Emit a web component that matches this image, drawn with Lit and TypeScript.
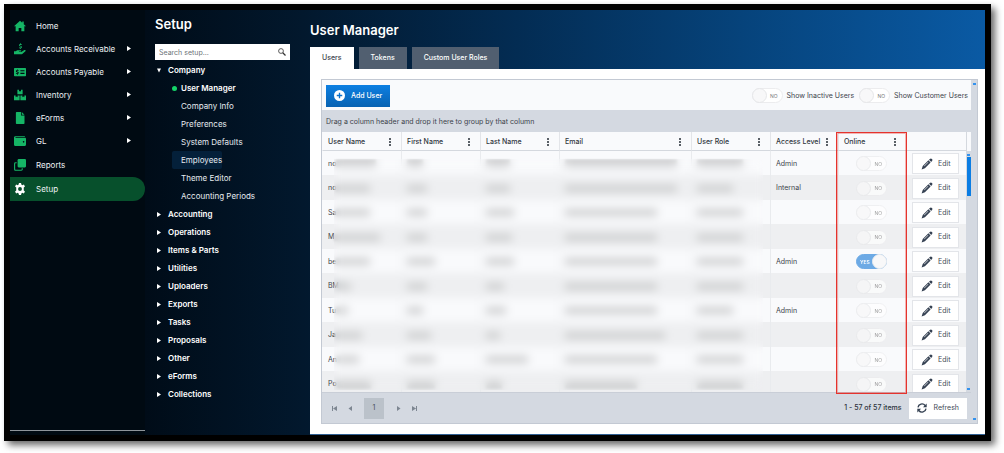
import { LitElement, html, css, svg, nothing } from "lit";
import { customElement, state } from "lit/decorators.js";
import { classMap } from "lit/directives/class-map.js";

interface NavItem {
  label: string;
  icon: keyof typeof navIcons;
  expandable?: boolean;
  tall?: boolean;
  active?: boolean;
}

interface UserRow {
  id: string;
  redacted: number[];
  access: string;
  online: boolean;
}

const navIcons = {
  home: svg`<path d="M8 1 0 8.200h2.200V15h4v-4.400h3.600V15h4V8.200H16L13 5.500V2h-2v1.700z"/>`,
  receivable: svg`<path d="M0 11h2.400l1.800-1.300h4.600c1.200 0 1.200 1.700 0 1.700H6.600v.5h3.200l3.900-2.500c1.400-.8 2.600.7 1.500 1.700L11 14.600c-.4.3-.8.400-1.300.4H0z"/><path d="M8 .4h1v1h1.200v1.100H8.200c-.7 0-.6.8 0 1l1.200.4c1.700.6 1.500 2.800-.2 3.100V8h-1V7H6.600V5.900h2.200c.8 0 .7-.9.1-1.100l-1.200-.4C6.100 3.900 6.300 1.700 8 1.400z"/>`,
  payable: svg`<path fill-rule="evenodd" d="M1 2.500h14a1 1 0 0 1 1 1v9a1 1 0 0 1-1 1H1a1 1 0 0 1-1-1v-9a1 1 0 0 1 1-1zM8.500 5.500V7H14V5.500zM8.500 9v1.500H14V9zM4 4.500v.9c-1.800.3-2 2.400-.3 3l.9.300c.5.2.5.8-.1.8H2.600v1.100H4v1h1v-1c1.700-.4 1.900-2.400.3-3l-1-.4c-.5-.2-.4-.8.1-.8h1.700V5.300H5v-.8z"/>`,
  inventory: svg`<path d="M4.500 1H6.700v2.400l1.300-.8 1.300.8V1h2.200v6h-7zM0 8.500h2.200v2.400l1.300-.8 1.300.8V8.500H7.500V15H0zM8.500 8.500h2.700v2.400l1.300-.8 1.300.8V8.500H16V15H8.500z"/>`,
  file: svg`<path d="M3.500 0h5.800v4.700H14V15a1 1 0 0 1-1 1H3.500a1 1 0 0 1-1-1V1a1 1 0 0 1 1-1z"/><path d="M10.300 0 14 3.700h-3.700z"/>`,
  wallet: svg`<path fill-rule="evenodd" d="M2 1.500h12.500v1.300H2v1h12.500c1 0 1.500.5 1.500 1.500v7.500c0 1-.5 1.700-1.500 1.700H2c-1.300 0-2-.7-2-2V3.500c0-1.300.7-2 2-2zM12.800 8a1.100 1.100 0 1 0 0 2.200 1.100 1.100 0 0 0 0-2.200z"/>`,
  copies: svg`<path d="M6.300 0h8.200A1.500 1.500 0 0 1 16 1.500v8.200a1.500 1.500 0 0 1-1.500 1.500H6.300a1.500 1.500 0 0 1-1.500-1.500V1.500A1.500 1.500 0 0 1 6.300 0z"/><path d="M3.600 5H2a1.200 1.200 0 0 0-1.200 1.200v7.600A1.200 1.200 0 0 0 2 15h7.800a1.200 1.200 0 0 0 1.200-1.200v-1.400" fill="none" stroke="currentColor" stroke-width="1.500"/>`,
  gear: svg`<path fill-rule="evenodd" d="m6.600 0-.4 2.100-1.300.8-2.100-.8L1.400 4.600 3 6v4l-1.600 1.400 1.400 2.500 2.100-.8 1.300.8.4 2.100h2.800l.4-2.100 1.300-.8 2.100.8 1.400-2.500L13 10V6l1.600-1.400-1.400-2.500-2.100.8-1.300-.8L9.400 0zM8 5.400a2.600 2.600 0 1 1 0 5.200 2.600 2.600 0 0 1 0-5.200z"/>`,
};

const navItems: NavItem[] = [
  { label: "Home", icon: "home" },
  { label: "Accounts Receivable", icon: "receivable", expandable: true },
  { label: "Accounts Payable", icon: "payable", expandable: true },
  { label: "Inventory", icon: "inventory", expandable: true },
  { label: "eForms", icon: "file", expandable: true },
  { label: "GL", icon: "wallet", expandable: true },
  { label: "Reports", icon: "copies", tall: true },
  { label: "Setup", icon: "gear", tall: true, active: true },
];

const companyPages = [
  "User Manager",
  "Company Info",
  "Preferences",
  "System Defaults",
  "Employees",
  "Theme Editor",
  "Accounting Periods",
];

const closedGroups = [
  "Accounting",
  "Operations",
  "Items & Parts",
  "Utilities",
  "Uploaders",
  "Exports",
  "Tasks",
  "Proposals",
  "Other",
  "eForms",
  "Collections",
];

const columns = [
  { label: "User Name", width: 79 },
  { label: "First Name", width: 79 },
  { label: "Last Name", width: 79 },
  { label: "Email", width: 132 },
  { label: "User Role", width: 79 },
  { label: "Access Level", width: 68 },
  { label: "Online", width: 68 },
];

const users: UserRow[] = [
  { id: "no", redacted: [40, 16, 24, 112, 46], access: "Admin", online: false },
  { id: "no", redacted: [34, 20, 24, 112, 36], access: "Internal", online: false },
  { id: "Sa", redacted: [34, 20, 28, 92, 46], access: "", online: false },
  { id: "M", redacted: [46, 20, 26, 92, 46], access: "", online: false },
  { id: "be", redacted: [34, 28, 28, 92, 46], access: "Admin", online: true },
  { id: "BM", redacted: [12, 20, 18, 92, 46], access: "", online: false },
  { id: "Tu", redacted: [12, 16, 20, 92, 36], access: "Admin", online: false },
  { id: "Ja", redacted: [26, 24, 14, 100, 46], access: "", online: false },
  { id: "An", redacted: [22, 28, 42, 92, 46], access: "", online: false },
  { id: "Po", redacted: [34, 28, 16, 72, 46], access: "", online: false },
];

@customElement("app-root")
export class AppRoot extends LitElement {
  @state() private tab = "Users";

  static styles = css`
    :host {
      display: block;
      box-sizing: border-box;
      padding: 4px 13px 13px 4px;
      background: #fff;
      color: #3c434b;
      font: 7px/12px Inter, "Liberation Sans", sans-serif;
    }
    *, *::before, *::after { box-sizing: border-box; }
    button, input { font: inherit; color: inherit; margin: 0; padding: 0; border: 0; background: none; }
    a { color: inherit; text-decoration: none; }
    ul { list-style: none; margin: 0; padding: 0; }
    h1, h2 { margin: 0; color: #fff; font-size: 13px; line-height: 16px; font-weight: 600; }
    svg { display: block; fill: currentColor; flex: none; }

    .frame {
      display: grid;
      grid-template-columns: 135px 165px minmax(0, 1fr);
      border: 6px solid #000;
      background: linear-gradient(90deg, #000a12 0, #000c18 14%, #02182d 30%, #032c53 52%, #06437b 75%, #0a5aa4 100%);
      box-shadow: 4px 4px 7px rgba(0, 0, 0, 0.6);
    }

    .nav {
      display: flex;
      flex-direction: column;
      justify-content: space-between;
      padding: 4px 0;
      background: #000a12;
      color: #eef2f5;
      font-size: 8px;
    }
    .nav-link { display: flex; align-items: center; height: 23px; padding: 0 14px 0 4px; }
    .nav-link.tall { height: 25px; }
    .nav-link svg { color: #15b566; margin-right: 10px; }
    .nav-link .label { flex: 1; }
    .nav-link.active { height: 24px; background: #07502c; border-radius: 0 12px 12px 0; }
    .nav-link.active svg { color: #fff; }
    .nav-link .caret { width: 4px; height: 5px; margin: 0; color: #fff; }
    .nav-rule { width: 100%; height: 1px; margin: 0; border: 0; background: #8d949a; }

    .sidebar { padding: 6px 20px 0 10px; color: #e6ebf0; font-size: 8px; }
    .search { display: flex; align-items: center; height: 16px; margin: 12px 0 1px; padding: 0 4px; background: #fff; color: #333; }
    .search input { flex: 1; min-width: 0; height: 16px; font-size: 7px; outline: 0; }
    .search input::placeholder { color: #6d7378; opacity: 1; }
    .group { display: flex; align-items: center; width: 100%; height: 18px; padding-left: 2px; gap: 7px; font-weight: 600; color: #fff; text-align: left; }
    .group svg { width: 4px; height: 5px; }
    .page { display: flex; align-items: center; height: 18px; margin-left: 17px; padding: 0 2px 0 9px; width: fit-content; border-radius: 2px; }
    .page.hover { width: 50px; background: #04203a; padding-right: 0; }
    .page.current { gap: 4px; padding-left: 0; font-weight: 600; color: #fff; }
    .page.current::before { content: ""; width: 5px; height: 5px; border-radius: 50%; background: #14d468; }

    .main { padding-top: 12px; }
    .tabs { display: flex; gap: 5px; margin-top: 9px; }
    .tab { height: 22px; padding: 0 12px; background: #515f70; color: #fff; font-weight: 500; }
    .tab.selected { background: #fff; color: #3c434b; }
    .panel { padding: 10px 7px 10px 11px; background: #fff; border-bottom: 1px solid #2f5f92; }
    .grid { display: flex; border: 1px solid #c3c9d3; background: #d4d9e1; }
    .content { flex: 1; min-width: 0; }
    .gutter { display: flex; flex-direction: column; justify-content: space-between; align-items: center; width: 6px; padding: 3px 0; color: #3392ee; }
    .tick { width: 3px; height: 2px; background: currentColor; }

    .toolbar { display: flex; align-items: center; gap: 5px; height: 30px; padding: 1px 3px 0 4px; background: #f9fafc; }
    .add { display: flex; align-items: center; gap: 6px; height: 22px; padding: 0 8px; margin-right: auto; background: linear-gradient(#0c7fe2, #0862b2); color: #fff; font-weight: 500; }
    .group-bar { height: 22px; padding: 6px 4px 0; }

    .switch { position: relative; display: flex; align-items: center; gap: 4px; }
    .switch input { position: absolute; width: 30px; height: 15px; opacity: 0; }
    .track { display: flex; align-items: center; justify-content: space-between; width: 31px; height: 15px; padding-right: 4px; border: 1px solid #ececee; border-radius: 8px; background: #fff; color: #777; font-size: 5px; }
    .track::before { content: ""; width: 15px; height: 15px; margin: -1px; border: 1px solid #e6e7e9; border-radius: 50%; background: #f8f8f9; }
    .cell-switch { justify-content: center; opacity: 0.7; }
    .track.on { flex-direction: row-reverse; padding: 0 0 0 3px; background: #3289dc; border-color: #3289dc; color: #fff; font-weight: 600; }

    .body { position: relative; display: flex; }
    .viewport { flex: 1; min-width: 0; max-height: 260px; overflow: hidden; }
    table { width: 100%; table-layout: fixed; border-spacing: 0; }
    th, td { padding: 1px 7px 0 5px; text-align: left; white-space: nowrap; }
    th { height: 19px; border-left: 1px solid #e3e5e9; border-bottom: 1px solid #d4d8de; background: #f9fafc; font-weight: 500; color: #30363d; }
    td { height: 24px; border-left: 1px solid #e9ebee; }
    th:first-child, td:first-child { border-left-color: transparent; }
    tbody tr { background: #f9fafc; }
    tbody tr:nth-child(even) { background: #eeeff1; }
    tbody tr:nth-child(even) td { height: 25px; }
    .head { display: flex; align-items: center; justify-content: space-between; }
    .menu { height: 12px; width: 8px; display: grid; place-items: center; color: #5a6067; }
    .name { display: flex; align-items: center; }
    .smudge { display: block; height: 7px; background: #cdcecf; filter: blur(1px); }
    .redaction { position: absolute; left: 12px; right: 32%; top: 27px; bottom: 2px; backdrop-filter: blur(4px); }
    .highlight { position: absolute; left: 79.200%; right: 9.900%; top: 0; bottom: -2px; border: 1px solid #e5332d; outline: 1px solid rgba(229, 51, 45, 0.35); outline-offset: -2px; pointer-events: none; }
    .edit, .refresh { display: flex; align-items: center; background: #fff; color: #3f4a57; }
    .edit { height: 21px; gap: 5px; padding: 0 8px; border: 1px solid #e3e5e9; }
    .edit svg, .refresh svg { color: #354152; }
    .scroll { display: flex; flex-direction: column; align-items: center; justify-content: space-between; width: 5px; padding-bottom: 2px; color: #3392ee; }
    .scroll-head { width: 100%; height: 19px; background: #f9fafc; border-left: 1px solid #d4d8de; }
    .scroll-track { flex: 1; display: flex; flex-direction: column; align-items: center; gap: 1px; padding-top: 3px; }
    .thumb { width: 4px; height: 39px; background: #0b7de3; }

    .pager { display: flex; align-items: center; height: 31px; padding: 0 4px; border-top: 1px solid #c9ced7; color: #2d343b; }
    .step { width: 16px; height: 20px; display: grid; place-items: center; color: #7d8691; }
    .current-page { width: 20px; height: 21px; margin: 0 6px; background: #bbc2ca; color: #45505c; }
    .count { margin-left: auto; margin-right: 8px; font-weight: 500; }
    .refresh { height: 21px; gap: 6px; padding: 0 8px; }
  `;

  private caret(down = false) {
    return html`<svg class="caret" width="4" height="5" viewBox="0 0 4 5" aria-hidden="true">
      <path d=${down ? "M0 .5h4L2 4.500z" : "M0 0 4 2.500 0 5z"} />
    </svg>`;
  }

  private toggle(on: boolean, name: string, label?: string) {
    return html`<label class=${classMap({ switch: true, "cell-switch": !label })}>
      <input type="checkbox" role="switch" aria-label=${name} .checked=${on} />
      <span class=${classMap({ track: true, on })}>${on ? "YES" : "NO"}</span>
      ${label ? html`<span>${label}</span>` : nothing}
    </label>`;
  }

  private smudge(width: number) {
    return html`<span class="smudge" style="width:${width}px"></span>`;
  }

  private renderNav() {
    return html`<nav class="nav" aria-label="Main">
      <ul>
        ${navItems.map(
          (n) => html`<li>
            <a href="#" class=${classMap({ "nav-link": true, tall: !!n.tall, active: !!n.active })}>
              <svg width="12" height="12" viewBox="0 0 16 16" aria-hidden="true">${navIcons[n.icon]}</svg>
              <span class="label">${n.label}</span>
              ${n.expandable ? this.caret() : nothing}
            </a>
          </li>`
        )}
      </ul>
      <hr class="nav-rule" />
    </nav>`;
  }

  private renderSidebar() {
    return html`<aside class="sidebar">
      <h2>Setup</h2>
      <label class="search">
        <input type="text" placeholder="Search setup..." aria-label="Search setup" />
        <svg width="8" height="8" viewBox="0 0 16 16" aria-hidden="true">
          <circle cx="6" cy="6" r="4.800" fill="none" stroke="currentColor" stroke-width="1.600" />
          <path d="M9.500 9.500 15 15" stroke="currentColor" stroke-width="2.400" />
        </svg>
      </label>
      <button class="group" aria-expanded="true">${this.caret(true)}Company</button>
      <ul>
        ${companyPages.map(
          (p) => html`<li>
            <a href="#" class=${classMap({ page: true, current: p === "User Manager", hover: p === "Employees" })}>${p}</a>
          </li>`
        )}
      </ul>
      ${closedGroups.map((g) => html`<button class="group" aria-expanded="false">${this.caret()}${g}</button>`)}
    </aside>`;
  }

  private renderTable() {
    return html`<div class="body">
      <div class="viewport">
        <table>
          <colgroup>
            ${columns.map((c) => html`<col style="width:${c.width}px" />`)}
            <col style="width:61px" />
          </colgroup>
          <thead>
            <tr>
              ${columns.map(
                (c) => html`<th scope="col">
                  <div class="head">
                    ${c.label}
                    <button class="menu" aria-label="${c.label} column menu">
                      <svg width="2" height="8" viewBox="0 0 2 8">
                        <path d="M0 0h2v2H0zM0 3h2v2H0zM0 6h2v2H0z" />
                      </svg>
                    </button>
                  </div>
                </th>`
              )}
              <th></th>
            </tr>
          </thead>
          <tbody>
            ${users.map(
              (u) => html`<tr>
                <td>
                  <div class="name"><span>${u.id}</span>${this.smudge(u.redacted[0])}</div>
                </td>
                ${u.redacted.slice(1).map((w) => html`<td>${this.smudge(w)}</td>`)}
                <td>${u.access}</td>
                <td>${this.toggle(u.online, "Online")}</td>
                <td>
                  <button class="edit">
                    <svg width="12" height="12" viewBox="0 0 16 16" aria-hidden="true">
                      <path fill-rule="evenodd" d="M11.800 1.200a2 2 0 0 1 2.800 0a2 2 0 0 1 0 2.800L13.600 5.200 10.700 2.300zM9.900 3l2.900 2.900-7.600 7.700L.8 15.200l1.500-4.500zM9.300 5.200l-5.300 5.300.6.6 5.300-5.300z" />
                    </svg>
                    Edit
                  </button>
                </td>
              </tr>`
            )}
          </tbody>
        </table>
      </div>
      <div class="scroll" aria-hidden="true">
        <div class="scroll-head"></div>
        <div class="scroll-track"><span class="tick"></span><span class="thumb"></span></div>
        <span class="tick"></span>
      </div>
      <div class="redaction"></div>
      <div class="highlight"></div>
    </div>`;
  }

  private step(name: string, path: string) {
    return html`<button class="step" aria-label=${name}>
      <svg width="5" height="5" viewBox="0 0 5 5"><path d=${path} /></svg>
    </button>`;
  }

  private renderPager() {
    return html`<div class="pager">
      ${this.step("First page", "M0 0h1v5H0zM5 0v5L1 2.500z")}
      ${this.step("Previous page", "M4 0v5L.5 2.500z")}
      <button class="current-page" aria-current="page">1</button>
      ${this.step("Next page", "M1 0v5l3.500-2.500z")}
      ${this.step("Last page", "M4 0h1v5H4zM0 0v5l4-2.500z")}
      <span class="count">1 - 57 of 57 items</span>
      <button class="refresh">
        <svg width="10" height="10" viewBox="0 0 16 16" aria-hidden="true">
          <path d="M1.600 7A6.400 6.400 0 0 1 13 4M14.400 9A6.400 6.400 0 0 1 3 12" fill="none" stroke="currentColor" stroke-width="2.200" />
          <path d="M15.500 .8v6h-6zM.5 15.200v-6h6z" />
        </svg>
        Refresh
      </button>
    </div>`;
  }

  render() {
    return html`<div class="frame">
      ${this.renderNav()} ${this.renderSidebar()}
      <main class="main">
        <h1>User Manager</h1>
        <div class="tabs" role="tablist">
          ${["Users", "Tokens", "Custom User Roles"].map(
            (t) => html`<button
              role="tab"
              aria-selected=${t === this.tab}
              class=${classMap({ tab: true, selected: t === this.tab })}
              @click=${() => (this.tab = t)}
            >${t}</button>`
          )}
        </div>
        <div class="panel" role="tabpanel">
          <div class="grid">
            <div class="content">
              <div class="toolbar">
                <button class="add">
                  <svg width="11" height="11" viewBox="0 0 16 16" aria-hidden="true">
                    <path fill-rule="evenodd" d="M8 0a8 8 0 1 1 0 16A8 8 0 0 1 8 0zM7 4v3H4v2h3v3h2V9h3V7H9V4z" />
                  </svg>
                  Add User
                </button>
                ${this.toggle(false, "Show Inactive Users", "Show Inactive Users")}
                ${this.toggle(false, "Show Customer Users", "Show Customer Users")}
              </div>
              <div class="group-bar">Drag a column header and drop it here to group by that column</div>
              ${this.renderTable()} ${this.renderPager()}
            </div>
            <div class="gutter" aria-hidden="true"><span class="tick"></span><span class="tick"></span></div>
          </div>
        </div>
      </main>
    </div>`;
  }
}
